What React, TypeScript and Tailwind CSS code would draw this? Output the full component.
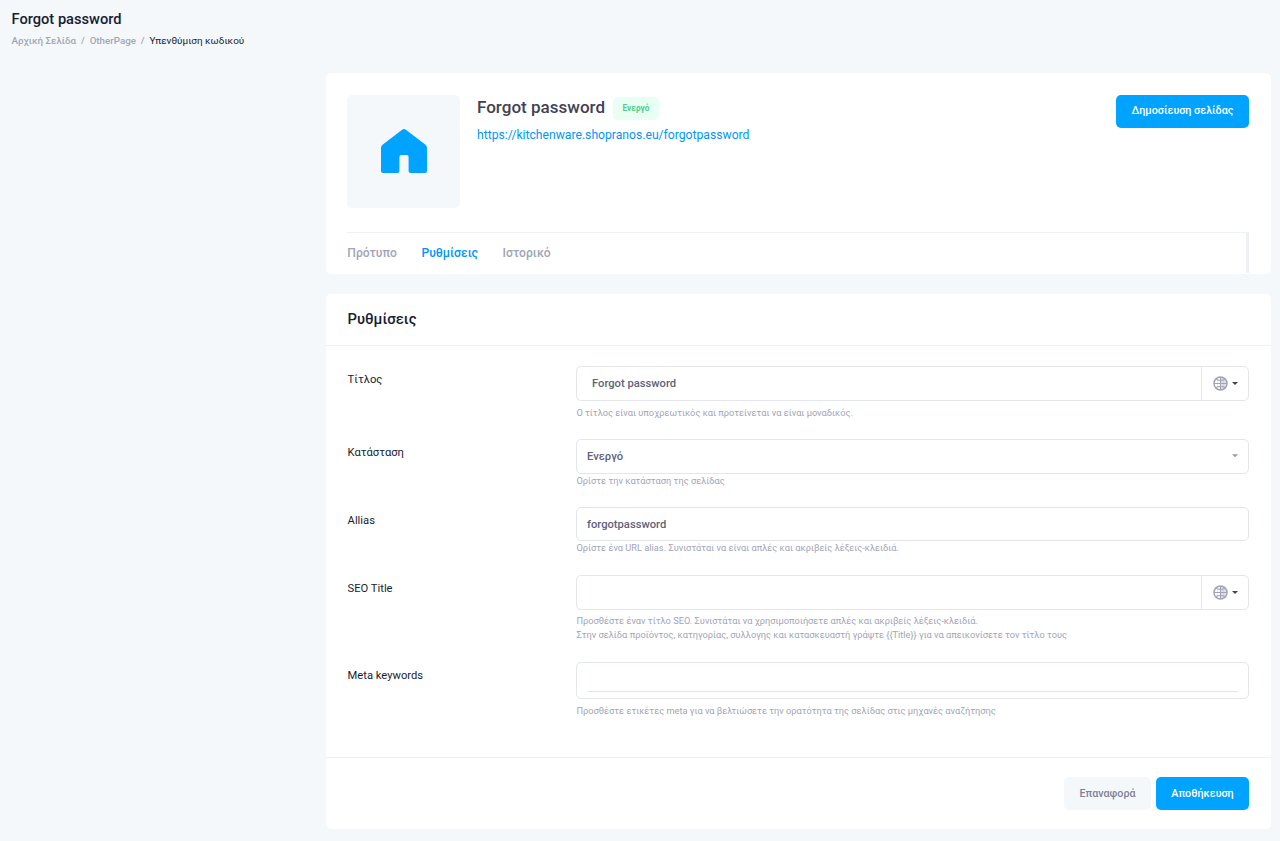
import type { ReactNode } from "react";

function GlobeIcon() {
  return (
    <svg width="15" height="15" viewBox="0 0 15 15" fill="none" stroke="#a1a5b7" strokeWidth="1.1">
      <path d="M7.500 .8a6.700 6.700 0 0 1 0 13.400z" fill="#dfe1e9" stroke="none" />
      <circle cx="7.500" cy="7.500" r="6.500" strokeWidth="1.500" />
      <path d="M7.500 1v13M1 7.500h13" />
      <path d="M2.600 3.200Q4 4.500 7.500 4.500T12.400 3.200M2.600 11.800Q4 10.500 7.500 10.500T12.400 11.800" />
      <path d="M4.900 2.500Q3.700 7.500 4.900 12.500M10.100 2.500Q11.300 7.500 10.100 12.500" strokeWidth=".6" strokeOpacity=".4" />
    </svg>
  );
}

function LanguageField({ value }: { value: string }) {
  return (
    <div className="flex h-[35px] rounded-[5px] border border-[#e4e6ef] text-[11.2px] font-medium text-[#5e6278]">
      <div className="flex flex-1 items-center pl-[15px] pt-px">{value}</div>
      <div className="flex w-[47px] items-center border-l border-[#e4e6ef] pl-[11px]">
        <GlobeIcon />
        <svg className="ml-[4px]" width="6" height="3" viewBox="0 0 6 3">
          <path d="M0 0h6L3 3z" fill="#3f4254" />
        </svg>
      </div>
    </div>
  );
}

function Row({ label, hint, height, hintClass, children }: { label: string; hint: ReactNode; height: string; hintClass: string; children: ReactNode }) {
  return (
    <div className={`flex ${height}`}>
      <div className="w-[229px] shrink-0 pl-[0.6px] pt-[6px] text-[11.2px] leading-4 text-[#181c32]">{label}</div>
      <div className="flex-1">
        {children}
        <div className={`pl-[0.4px] text-[9.265px] leading-[14px] text-[#a1a5b7] ${hintClass}`}>{hint}</div>
      </div>
    </div>
  );
}

export default function App() {
  return (
    <div className="h-[841px] w-[1280px] overflow-hidden bg-[#f5f8fa] font-['Roboto','Noto_Sans',sans-serif]">
      <header className="h-[73px] pl-[11.5px] pt-[9px]">
        <h1 className="text-[14.65px] font-medium leading-5 text-[#181c32]">Forgot password</h1>
        <nav className="mt-[5px] flex text-[9.75px] leading-[14px] text-[#a1a5b7]">
          <span className="font-medium">Αρχική Σελίδα</span>
          <span className="mx-[4.9px] font-medium">/</span>
          <span className="font-medium">OtherPage</span>
          <span className="mx-[4.9px] font-medium">/</span>
          <span className="text-[9.95px] text-[#181c32]">Υπενθύμιση κωδικού</span>
        </nav>
      </header>

      <main className="ml-[326px] w-[945px]">
        <section className="h-[201px] rounded-[5px] bg-white pl-[21px] pr-[22px] pt-[22px]">
          <div className="flex h-[137px] items-start">
            <div className="flex size-[113px] items-center justify-center rounded-[5px] bg-[#f5f8fa]">
              <svg width="46" height="44" viewBox="0 0 46 44" className="mb-px ml-px">
                <path d="M20.8.9a3.5 3.5 0 0 1 4.4 0L44.5 15.7Q46 17 46 18.8V42a2 2 0 0 1-2 2H29.6a2 2 0 0 1-2-2V28a2 2 0 0 0-2-2h-5.2a2 2 0 0 0-2 2v14a2 2 0 0 1-2 2H2a2 2 0 0 1-2-2V18.8q0-1.800 1.500-3.100z" fill="#00a3ff" />
              </svg>
            </div>
            <div className="ml-[17px] flex-1">
              <div className="flex h-[25px] items-center">
                <h2 className="text-[17.05px] font-medium text-[#3f4254]">Forgot password</h2>
                <span className="ml-2 mt-[2px] flex h-[23px] w-[46px] items-center justify-center rounded-[5px] bg-[#e8fff3] text-[8.3px] font-bold text-[#50cd89]">Ενεργό</span>
              </div>
              <a className="mt-[5px] block text-[12.17px] leading-5 text-[#0095ff]">https://kitchenware.shopranos.eu/forgotpassword</a>
            </div>
            <button className="h-[33px] w-[133px] rounded-[5px] bg-[#00a3ff] pb-px text-[10.75px] font-medium text-white">Δημοσίευση σελίδας</button>
          </div>
          <nav className="flex h-[41px] gap-[24.500px] border-r-[3px] border-t border-[#eff2f5] pl-[0.3px] pt-[10px] text-[12.15px] font-medium leading-5 text-[#a1a5b7]">
            <span>Πρότυπο</span>
            <span className="text-[#0095ff]">Ρυθμίσεις</span>
            <span>Ιστορικό</span>
          </nav>
        </section>

        <section className="mt-5 h-[535px] rounded-[5px] bg-white">
          <h3 className="h-[52px] border-b border-[#eff2f5] px-[21.5px] pt-[15px] text-[14.8px] font-medium leading-5 text-[#181c32]">Ρυθμίσεις</h3>
          <div className="h-[411px] pl-[21px] pr-[22px] pt-[20px]">
            <Row label="Τίτλος" height="h-[73px]" hintClass="pt-[5px]" hint="Ο τίτλος είναι υποχρεωτικός και προτείνεται να είναι μοναδικός.">
              <LanguageField value="Forgot password" />
            </Row>
            <Row label="Κατάσταση" height="h-[68px]" hintClass="" hint="Ορίστε την κατάσταση της σελίδας">
              <div className="flex h-[35px] items-center justify-between rounded-[5px] border border-[#e4e6ef] px-[10px] text-[11.2px] font-medium text-[#5e6278]">
                <span className="pt-px">Ενεργό</span>
                <svg className="mb-px" width="6" height="4" viewBox="0 0 6 4">
                  <path d="M0 .2h6L3 3.200z" fill="#999" />
                </svg>
              </div>
            </Row>
            <Row label="Allias" height="h-[68px]" hintClass="" hint="Ορίστε ένα URL alias. Συνιστάται να είναι απλές και ακριβείς λέξεις-κλειδιά.">
              <div className="flex h-[34px] items-center rounded-[5px] border border-[#e4e6ef] px-[10px] pt-[2px] text-[11.2px] font-medium text-[#5e6278]">forgotpassword</div>
            </Row>
            <Row
              label="SEO Title"
              height="h-[87px]"
              hintClass="pt-[4px]"
              hint={
                <>
                  Προσθέστε έναν τίτλο SEO. Συνιστάται να χρησιμοποιήσετε απλές και ακριβείς λέξεις-κλειδιά.
                  <br />
                  Στην σελίδα προϊόντος, κατηγορίας, συλλογης και κατασκευαστή γράψτε {"{{Title}}"} για να απεικονίσετε τον τίτλο τους
                </>
              }
            >
              <LanguageField value="" />
            </Row>
            <Row label="Meta keywords" height="h-[70px]" hintClass="pt-[5px]" hint="Προσθέστε ετικέτες meta για να βελτιώσετε την ορατότητα της σελίδας στις μηχανές αναζήτησης">
              <div className="flex h-[37px] flex-col justify-end rounded-[5px] border border-[#e4e6ef] px-[10px] pb-[6px]">
                <div className="h-px bg-[#e4e6ef]" />
              </div>
            </Row>
          </div>
          <footer className="flex h-[72px] justify-end gap-[5px] border-t border-[#eff2f5] pr-[22px] pt-[19px] text-[10.75px] font-medium">
            <button className="h-[33px] w-[87px] rounded-[5px] bg-[#f5f8fa] pt-px text-[#7e8299]">Επαναφορά</button>
            <button className="h-[33px] w-[93px] rounded-[5px] bg-[#00a3ff] pt-px text-white">Αποθήκευση</button>
          </footer>
        </section>
      </main>
    </div>
  );
}
